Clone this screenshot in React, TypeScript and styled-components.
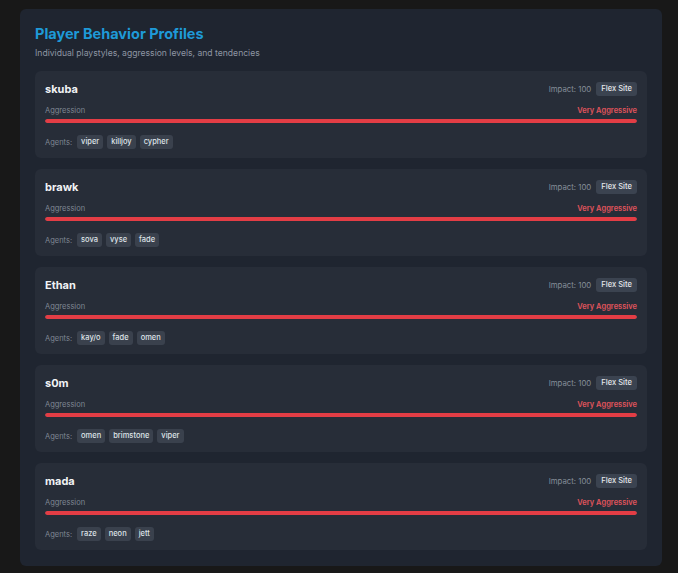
import React from "react";
import styled, { createGlobalStyle } from "styled-components";

const Global = createGlobalStyle`
  html, body {
    margin: 0;
    padding: 0;
    background: #181818;
  }
  body {
    font-family: Inter, "Noto Sans", "Liberation Sans", sans-serif;
    -webkit-font-smoothing: antialiased;
  }
`;

const Page = styled.div`
  padding: 9px 16px 9px 20px;
`;

const Panel = styled.section`
  background: #1f2530;
  border-radius: 6px;
  padding: 16px 15px 16px 15px;
`;

const Title = styled.h2`
  margin: 0;
  font-size: 14.5px;
  line-height: 18px;
  font-weight: 700;
  color: #1e9ad8;
`;

const Subtitle = styled.p`
  margin: 5px 0 0;
  font-size: 8.6px;
  line-height: 11px;
  color: #8e96a3;
`;

const List = styled.div`
  margin-top: 12px;
  display: flex;
  flex-direction: column;
  gap: 11px;
`;

const Card = styled.article`
  background: #272d38;
  border-radius: 6px;
  padding: 11px 10px 9px;
  display: flex;
  flex-direction: column;
`;

const Header = styled.div`
  display: flex;
  align-items: center;
  justify-content: space-between;
  height: 14px;
`;

const Name = styled.h3`
  margin: 0;
  font-size: 11px;
  line-height: 14px;
  font-weight: 700;
  color: #f1f3f5;
`;

const Meta = styled.div`
  display: flex;
  align-items: center;
  gap: 5px;
`;

const Impact = styled.span`
  font-size: 7.8px;
  color: #858d99;
`;

const Badge = styled.span`
  background: #3b4350;
  color: #e4e7eb;
  font-size: 7.6px;
  font-weight: 500;
  line-height: 14px;
  padding: 0 5px;
  border-radius: 3px;
`;

const LabelRow = styled.div`
  display: flex;
  justify-content: space-between;
  align-items: center;
  margin-top: 10px;
  font-size: 7.5px;
  line-height: 10px;
`;

const Label = styled.span`
  color: #7f8793;
`;

const Level = styled.span<{ $tone: string }>`
  color: ${(p) => p.$tone};
  font-weight: 600;
`;

const Track = styled.div`
  margin-top: 3px;
  height: 4px;
  border-radius: 2px;
  background: #3a414d;
  overflow: hidden;
`;

const Fill = styled.div<{ $tone: string }>`
  height: 100%;
  border-radius: 2px;
  background: ${(p) => p.$tone};
`;

const Agents = styled.div`
  display: flex;
  align-items: center;
  gap: 4px;
  margin-top: 12px;
  height: 14px;
`;

const AgentsLabel = styled.span`
  font-size: 7.5px;
  color: #7f8793;
  margin-right: 1px;
`;

const Tag = styled.span`
  background: #3a414d;
  color: #dfe3e8;
  font-size: 7.5px;
  font-weight: 500;
  line-height: 14px;
  padding: 0 4px;
  border-radius: 3px;
`;

type Player = {
  name: string;
  impact: number;
  role: string;
  aggression: number;
  agents: string[];
};

const players: Player[] = [
  { name: "skuba", impact: 100, role: "Flex Site", aggression: 100, agents: ["viper", "killjoy", "cypher"] },
  { name: "brawk", impact: 100, role: "Flex Site", aggression: 100, agents: ["sova", "vyse", "fade"] },
  { name: "Ethan", impact: 100, role: "Flex Site", aggression: 100, agents: ["kay/o", "fade", "omen"] },
  { name: "s0m", impact: 100, role: "Flex Site", aggression: 100, agents: ["omen", "brimstone", "viper"] },
  { name: "mada", impact: 100, role: "Flex Site", aggression: 100, agents: ["raze", "neon", "jett"] },
];

const levelFor = (v: number) =>
  v >= 80
    ? { text: "Very Aggressive", bar: "#e33d45", label: "#e2555d" }
    : v >= 60
    ? { text: "Aggressive", bar: "#f08a3c", label: "#f08a3c" }
    : { text: "Balanced", bar: "#3b9be0", label: "#3b9be0" };

export default function App() {
  return (
    <>
      <Global />
      <Page>
        <Panel>
          <Title>Player Behavior Profiles</Title>
          <Subtitle>Individual playstyles, aggression levels, and tendencies</Subtitle>
          <List>
            {players.map((p) => {
              const lvl = levelFor(p.aggression);
              return (
                <Card key={p.name}>
                  <Header>
                    <Name>{p.name}</Name>
                    <Meta>
                      <Impact>Impact: {p.impact}</Impact>
                      <Badge>{p.role}</Badge>
                    </Meta>
                  </Header>
                  <LabelRow>
                    <Label>Aggression</Label>
                    <Level $tone={lvl.label}>{lvl.text}</Level>
                  </LabelRow>
                  <Track>
                    <Fill $tone={lvl.bar} style={{ width: `${p.aggression}%` }} />
                  </Track>
                  <Agents>
                    <AgentsLabel>Agents:</AgentsLabel>
                    {p.agents.map((a) => (
                      <Tag key={a}>{a}</Tag>
                    ))}
                  </Agents>
                </Card>
              );
            })}
          </List>
        </Panel>
      </Page>
    </>
  );
}
